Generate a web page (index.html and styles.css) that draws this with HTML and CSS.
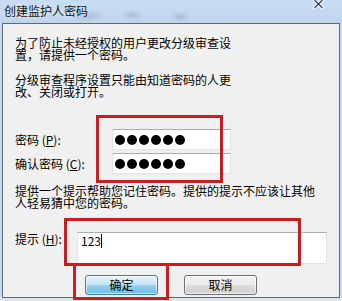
FILE: index.html
```html
<!DOCTYPE html>
<html lang="zh-CN">
<head>
<meta charset="utf-8">
<title>创建监护人密码</title>
<link rel="stylesheet" href="styles.css">
</head>
<body>
<div class="window">
  <div class="titlebar">
    <span class="title">创建监护人密码</span>
    <svg class="close" width="11" height="9" viewBox="0 0 11 9" aria-hidden="true">
      <path d="M1.5 0 L9.5 8 M9.5 0 L1.5 8" stroke="#ffffff" stroke-width="3" stroke-linecap="square"/>
      <path d="M1.5 0 L9.5 8 M9.5 0 L1.5 8" stroke="#3b4656" stroke-width="1.4"/>
    </svg>
  </div>
  <div class="client">
    <p class="para narrow">为了防止未经授权的用户更改分级审查设置，请提供一个密码。</p>
    <p class="para narrow gap">分级审查程序设置只能由知道密码的人更改、关闭或打开。</p>
    <div class="pw-grid">
      <label class="lbl">密码 (<u>P</u>):</label>
      <div class="field pw"><span class="dot"></span><span class="dot"></span><span class="dot"></span><span class="dot"></span><span class="dot"></span><span class="dot"></span></div>
      <label class="lbl">确认密码 (<u>C</u>):</label>
      <div class="field pw"><span class="dot"></span><span class="dot"></span><span class="dot"></span><span class="dot"></span><span class="dot"></span><span class="dot"></span></div>
    </div>
    <p class="para wide">提供一个提示帮助您记住密码。提供的提示不应该让其他人轻易猜中您的密码。</p>
    <div class="hint-row">
      <label class="lbl hint-lbl">提示 (<u>H</u>):</label>
      <div class="field hint"><span class="hint-text">123</span><span class="caret"></span></div>
    </div>
    <div class="buttons">
      <button class="btn default">确定</button>
      <button class="btn">取消</button>
    </div>
  </div>
</div>
<div class="mark mark-pw"></div>
<div class="mark mark-hint"></div>
<div class="mark mark-ok"></div>
</body>
</html>
```
FILE: styles.css
```css
html, body {
  margin: 0;
  padding: 0;
}
body {
  width: 342px;
  height: 301px;
  overflow: hidden;
  position: relative;
  background: linear-gradient(to bottom, #c6dbf1 0, #c6dbf1 297px, #dfe5ec 297px);
  font-family: "Noto Sans CJK SC", "Noto Sans", sans-serif;
  font-size: 12px;
  color: #000;
}
.window {
  display: flex;
  flex-direction: column;
}
.titlebar {
  height: 23px;
  display: flex;
  align-items: center;
  justify-content: space-between;
  padding-left: 4px;
  background:
    radial-gradient(ellipse 18px 6px at 88px 16px, rgba(120,140,170,0.35), rgba(120,140,170,0) 100%),
    radial-gradient(ellipse 10px 5px at 132px 15px, rgba(120,140,170,0.35), rgba(120,140,170,0) 100%),
    radial-gradient(ellipse 10px 5px at 180px 17px, rgba(120,140,170,0.35), rgba(120,140,170,0) 100%),
    linear-gradient(#c9ddf2, #bed5ee);
}
.title {
  line-height: 12px;
  margin-top: -1px;
  color: #111;
  text-shadow: 0 0 4px rgba(255,255,255,0.8);
}
.close {
  align-self: flex-start;
  margin-right: 18px;
}
.client {
  margin: 0 2px;
  height: 275px;
  box-sizing: border-box;
  border: 1px solid #5f6873;
  background: #f0f0f0;
  padding: 13px 12px 0 12px;
  display: flex;
  flex-direction: column;
}
.para {
  margin: 0;
  line-height: 12px;
}
.narrow { width: 220px; }
.gap { margin-top: 13px; }
.wide { width: 305px; margin-top: 11px; }
.pw-grid {
  margin-top: 31px;
  display: grid;
  grid-template-columns: 97px 119px;
  row-gap: 3px;
  align-items: center;
}
.lbl {
  line-height: 12px;
  white-space: nowrap;
}
.field {
  box-sizing: border-box;
  background: #fff;
  border: 1px solid #dde3e9;
  border-top-color: #abadb3;
  border-left-color: #e2e3ea;
}
.pw {
  height: 21px;
  display: flex;
  align-items: center;
  gap: 2px;
  padding-left: 2px;
}
.dot {
  width: 10px;
  height: 10px;
  border-radius: 50%;
  background: #000;
}
.hint-row {
  margin-top: 23px;
  display: flex;
  align-items: flex-start;
}
.hint-lbl {
  width: 63px;
  padding-top: 1px;
}
.hint {
  width: 254px;
  height: 32px;
  display: flex;
  align-items: flex-start;
  padding: 2px 0 0 3px;
}
.hint-text {
  line-height: 12px;
}
.caret {
  width: 1px;
  height: 14px;
  margin-top: -1px;
  background: #000;
}
.buttons {
  margin-top: 11px;
  margin-left: 70px;
  display: flex;
  gap: 26px;
}
.btn {
  width: 73px;
  height: 20px;
  box-sizing: border-box;
  padding: 0;
  font-family: inherit;
  font-size: 12px;
  line-height: 12px;
  color: #000;
  border: 1px solid #707070;
  border-radius: 3px;
  background: linear-gradient(#f2f2f2 0%, #ebebeb 50%, #dddddd 51%, #cfcfcf 100%);
  box-shadow: inset 0 0 0 1px rgba(255,255,255,0.7);
}
.btn.default {
  border-color: #3c7fb1;
  background: linear-gradient(#e5f4fc 0%, #c4e5f6 50%, #98d1ef 51%, #6cbde6 100%);
  box-shadow: inset 0 0 0 1px rgba(255,255,255,0.6);
}
.mark {
  position: absolute;
  box-sizing: border-box;
  border: 3px solid #cb1c1f;
}
.mark-pw {
  left: 96px;
  top: 115px;
  width: 127px;
  height: 68px;
}
.mark-hint {
  left: 64px;
  top: 218px;
  width: 237px;
  height: 48px;
}
.mark-ok {
  left: 73px;
  top: 263px;
  width: 96px;
  height: 37px;
}
```
